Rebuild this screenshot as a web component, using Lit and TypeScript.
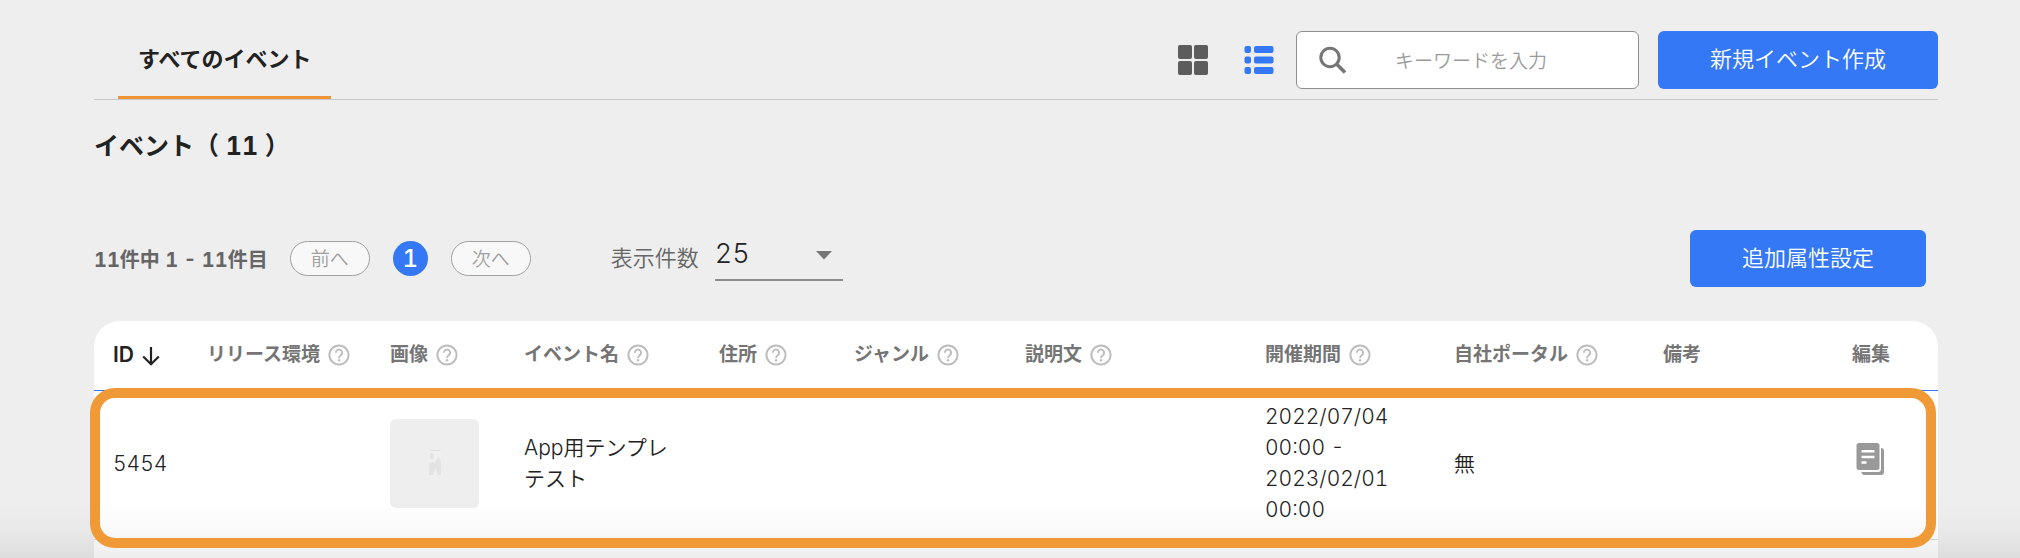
import { LitElement, html, css, svg } from "lit";
import { customElement, state } from "lit/decorators.js";

interface Column {
  label: string;
  width: number;
  help?: boolean;
  sort?: boolean;
}

const COLUMNS: Column[] = [
  { label: "ID", width: 94, sort: true },
  { label: "リリース環境", width: 183, help: true },
  { label: "画像", width: 134, help: true },
  { label: "イベント名", width: 195, help: true },
  { label: "住所", width: 135, help: true },
  { label: "ジャンル", width: 171, help: true },
  { label: "説明文", width: 240, help: true },
  { label: "開催期間", width: 189, help: true },
  { label: "自社ポータル", width: 209, help: true },
  { label: "備考", width: 189 },
  { label: "編集", width: 105 },
];
const TOTAL = COLUMNS.reduce((sum, c) => sum + c.width, 0);

const helpIcon = html`<svg class="help" viewBox="0 0 22 22" aria-hidden="true">
  ${svg`<circle cx="11" cy="11" r="9.6" fill="none" stroke="currentColor" stroke-width="2"/>
  <path d="M7.9 8.7a3.1 3.1 0 1 1 4.8 2.5c-1.1.8-1.7 1.3-1.7 2.7" fill="none" stroke="currentColor" stroke-width="1.9"/>
  <circle cx="11" cy="16.3" r="1.2" fill="currentColor"/>`}
</svg>`;

@customElement("app-root")
export class AppRoot extends LitElement {
  @state() private keyword = "";

  static styles = css`
    :host {
      display: flex;
      flex-direction: column;
      box-sizing: border-box;
      height: 100vh;
      overflow: hidden;
      position: relative;
      padding: 0 82px 0 94px;
      background: #eeeeee;
      color: #222;
      font-family: Inter, "Noto Sans CJK JP", sans-serif;
      font-size: 21px;
      font-weight: 350;
      font-variant-numeric: tabular-nums;
      line-height: 31px;
    }
    * { box-sizing: border-box; }
    button, input, select { font: inherit; font-variant-numeric: inherit; color: inherit; margin: 0; }
    button { cursor: pointer; }
    .bar {
      display: flex;
      align-items: center;
      height: 100px;
      padding-top: 20px;
      border-bottom: 1px solid #c8c8c8;
    }
    .tab {
      align-self: stretch;
      margin-left: 24px;
      padding: 2px 19px 0 20px;
      border: 0;
      border-bottom: 3px solid #ee9433;
      background: none;
      font-size: 22px;
      font-weight: 700;
    }
    .tools { display: flex; align-items: center; margin-left: auto; }
    .view { display: flex; padding: 0; border: 0; background: none; margin-right: 36px; color: #5c5c5c; }
    .view.on { margin-right: 22px; color: #3478f6; }
    .view svg { width: 30px; height: 30px; }
    .search {
      display: flex;
      align-items: center;
      width: 343px;
      height: 58px;
      border: 1px solid #8f8f8f;
      border-radius: 6px;
      background: #fff;
      margin-right: 19px;
      padding: 0 44px 0 19px;
    }
    .search svg { width: 32px; height: 32px; flex: none; }
    .search input {
      flex: 1;
      min-width: 0;
      border: 0;
      outline: 0;
      background: none;
      padding: 4px 0 0;
      text-align: center;
      font-size: 19px;
    }
    .search input::placeholder { color: #9b9b9b; opacity: 1; }
    .primary {
      height: 58px;
      padding: 0 52px;
      border: 0;
      border-radius: 6px;
      background: #3478f6;
      color: #fff;
      font-size: 22px;
    }
    h1 { margin: 28px 0 0; font-size: 25px; line-height: 36px; font-weight: 700; white-space: pre; }
    .controls { display: flex; align-items: center; margin-top: 66px; padding-right: 12px; }
    .count { color: #666; font-size: 20px; font-weight: 700; margin-right: 22px; padding-top: 3px; }
    .pager { display: flex; align-items: center; gap: 23px; }
    .step {
      width: 80px;
      height: 35px;
      padding: 2px 0 0;
      border: 1px solid #a0a0a0;
      border-radius: 18px;
      background: #f8f8f8;
      color: #a0a0a0;
      font-size: 19px;
    }
    .current {
      width: 35px;
      height: 35px;
      padding: 0;
      border: 0;
      border-radius: 50%;
      background: #3478f6;
      color: #fff;
      font-size: 24px;
      font-weight: 500;
    }
    .size-label { margin-left: 80px; color: #666; font-size: 22px; }
    .size { position: relative; display: flex; margin-left: 16px; }
    .size select {
      appearance: none;
      width: 128px;
      height: 45px;
      padding: 0 0 9px;
      border: 0;
      border-bottom: 2px solid #8c8c8c;
      border-radius: 0;
      background: none;
      font-size: 27px;
    }
    .size svg { position: absolute; right: 11px; top: 15px; width: 16px; height: 9px; pointer-events: none; }
    .controls .primary { margin-left: auto; height: 57px; }
    .card { flex: 1; margin-top: 34px; border-radius: 26px 26px 0 0; background: #fff; }
    table { width: 100%; table-layout: fixed; border-collapse: separate; border-spacing: 0; }
    th, td { padding: 0 0 0 19px; text-align: left; }
    th { height: 70px; padding-bottom: 3px; border-bottom: 1px solid #3478f6; font-size: 19px; font-weight: 700; color: #757575; white-space: nowrap; }
    .head { display: flex; align-items: center; gap: 8px; }
    .head.sort { color: #222; font-size: 21px; font-weight: 600; }
    .head.sort svg { width: 18px; height: 20px; margin-top: 4px; }
    .help { width: 22px; height: 22px; margin-top: 2px; color: #bdbdbd; flex: none; }
    .record { position: relative; }
    .record td { height: 149px; padding-bottom: 4px; border-bottom: 1px solid #d9d9d9; }
    .record td:first-child::after {
      content: "";
      position: absolute;
      z-index: 2;
      inset: -3px 2px -8px -4px;
      border: 10px solid #f09937;
      border-radius: 25px;
      pointer-events: none;
    }
    .name { display: block; width: 152px; }
    .period { display: block; width: 150px; }
    .thumb { display: flex; align-items: center; justify-content: center; width: 89px; height: 89px; border-radius: 6px; background: #eeeeee; }
    .thumb svg { width: 14px; height: 28px; }
    .edit { display: flex; padding: 0; border: 0; background: none; margin: 0 0 8px 4px; }
    .edit svg { width: 30px; height: 34px; }
    .fade {
      position: absolute;
      z-index: 1;
      inset: auto 0 0 0;
      height: 60px;
      background: linear-gradient(to bottom, rgba(0, 0, 0, 0), rgba(0, 0, 0, 0.02) 50%, rgba(0, 0, 0, 0.07));
      pointer-events: none;
    }
  `;

  render() {
    return html`
      <header class="bar">
        <button class="tab">すべてのイベント</button>
        <div class="tools">
          <button class="view" aria-label="グリッド表示">
            <svg viewBox="0 0 30 30" fill="currentColor">
              <rect x="0" y="0" width="14" height="14" rx="2" /><rect x="16" y="0" width="14" height="14" rx="2" />
              <rect x="0" y="16" width="14" height="14" rx="2" /><rect x="16" y="16" width="14" height="14" rx="2" />
            </svg>
          </button>
          <button class="view on" aria-label="リスト表示">
            <svg viewBox="0 0 30 30" fill="currentColor">
              <rect x="0.5" y="1" width="6.500" height="7" rx="2" /><rect x="10" y="1" width="19.500" height="7" rx="2" />
              <rect x="0.5" y="11.5" width="6.500" height="7" rx="2" /><rect x="10" y="11.5" width="19.500" height="7" rx="2" />
              <rect x="0.5" y="22" width="6.500" height="7" rx="2" /><rect x="10" y="22" width="19.500" height="7" rx="2" />
            </svg>
          </button>
          <label class="search">
            <svg viewBox="0 0 32 32" fill="none" stroke="#757575" stroke-width="3">
              <circle cx="14" cy="13.500" r="9.200" /><path d="M20.500 20l8.500 8.500" stroke-width="3.600" />
            </svg>
            <input
              type="text"
              aria-label="キーワードを入力"
              placeholder="キーワードを入力"
              .value=${this.keyword}
              @input=${(e: Event) => (this.keyword = (e.target as HTMLInputElement).value)}
            />
          </label>
          <button class="primary">新規イベント作成</button>
        </div>
      </header>
      <h1>イベント（ 11 ）</h1>
      <section class="controls">
        <span class="count">11件中 1 - 11件目</span>
        <nav class="pager">
          <button class="step">前へ</button>
          <button class="current">1</button>
          <button class="step">次へ</button>
        </nav>
        <label class="size-label" for="size">表示件数</label>
        <span class="size">
          <select id="size"><option>25</option><option>50</option></select>
          <svg viewBox="0 0 16 9"><path d="M0 0h16l-8 8.5z" fill="#757575" /></svg>
        </span>
        <button class="primary">追加属性設定</button>
      </section>
      <main class="card">
        <table>
          <thead>
            <tr>
              ${COLUMNS.map(
                (c) => html`<th scope="col" style="width:${(c.width / TOTAL) * 100}%">
                  <span class="head ${c.sort ? "sort" : ""}">${c.label}${c.sort
                    ? html`<svg viewBox="0 0 18 20" fill="none" stroke="#222" stroke-width="2.2"><path d="M9 1v17M1.2 10.5L9 18.3l7.8-7.8" /></svg>`
                    : ""}${c.help ? helpIcon : ""}</span>
                </th>`
              )}
            </tr>
          </thead>
          <tbody>
            <tr class="record">
              <td>5454</td>
              <td></td>
              <td>
                <span class="thumb">
                  <svg viewBox="0 0 14 28">
                    <rect x="1" y="1" width="12" height="25" rx="1.5" fill="#f0f0f0" />
                    <path d="M1.500 1.500h11" stroke="#e2e2e2" />
                    <ellipse cx="3.8" cy="7" rx="2" ry="3" fill="#e2e2e2" />
                    <path d="M1 26V14.500l3-2 2 2L10.500 8l2.500 4v14h-3l-2.500-7L5 26z" fill="#e3e3e3" />
                  </svg>
                </span>
              </td>
              <td><span class="name">App用テンプレテスト</span></td>
              <td></td>
              <td></td>
              <td></td>
              <td><span class="period">2022/07/04 00:00 - 2023/02/01 00:00</span></td>
              <td>無</td>
              <td></td>
              <td>
                <button class="edit" aria-label="編集">
                  <svg viewBox="0 0 30 34" fill="#999">
                    <path d="M3 1h18a2.500 2.500 0 0 1 2.500 2.500v22a2.500 2.500 0 0 1-2.500 2.500H3A2.500 2.500 0 0 1 .5 25.500v-22A2.500 2.500 0 0 1 3 1z" />
                    <path d="M25 6a3 3 0 0 1 3 3v21a3 3 0 0 1-3 3H8.500a3 3 0 0 1-3-3H22a3 3 0 0 0 3-3z" />
                    <path d="M5.500 9.300h13M5.500 15h13M5.500 20.500h5" stroke="#fff" stroke-width="2.400" />
                  </svg>
                </button>
              </td>
            </tr>
          </tbody>
        </table>
      </main>
      <div class="fade"></div>
    `;
  }
}
